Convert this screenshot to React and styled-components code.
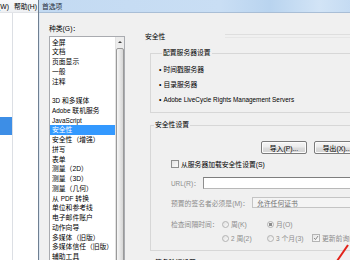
import React from 'react';
import styled, { createGlobalStyle } from 'styled-components';

const GlobalStyle = createGlobalStyle`
  html, body { margin: 0; padding: 0; background: #fff; }
  body { font-family: "Liberation Sans", "Noto Sans CJK SC", sans-serif; }
`;

const categories = [
  '全屏', '文档', '页面显示', '一般', '注释', '',
  ['3D', ' 和多媒体'], ['Adobe', ' 联机服务'], ['JavaScript', ''], '安全性',
  '安全性（增强）', '拼写', '表单', '测量（2D）', '测量（3D）', '测量（几何）',
  ['', '从 ', 'PDF', ' 转换'], '单位和参考线', '电子邮件账户', '动作向导',
  '多媒体（旧版）', '多媒体信任（旧版）', '辅助工具', '跟踪器',
];

const Screen = styled.div`
  position: relative;
  width: 350px;
  height: 260px;
  overflow: hidden;
  display: flex;
  font-size: 6.8px;
  color: #000;
  background: #fff;
`;

const Lat = styled.span`
  font-family: "Liberation Sans", sans-serif;
  font-size: 6.4px;
`;

/* background application behind the dialog */
const BackApp = styled.div`
  width: 38px;
  flex: none;
  display: flex;
  flex-direction: column;
  background: #fff;
`;

const MenuBar = styled.div`
  height: 12px;
  flex: none;
  display: flex;
  align-items: center;
  gap: 5px;
  background: linear-gradient(#f8f9fb, #eef0f3);
  border-bottom: 1px solid #e2e4e8;
  white-space: nowrap;
  margin-left: -2px;
`;

const BackBody = styled.div`
  flex: 1;
  display: flex;
`;

const BackSide = styled.div`
  width: 12px;
  border-right: 1px solid #dcdfe4;
`;

const BackSelection = styled.div`
  height: 18px;
  margin-top: 104px;
  background: #3d8ee6;
`;

/* dialog */
const Dialog = styled.div`
  flex: 1;
  display: flex;
  flex-direction: column;
  min-height: 0;
  border-left: 1px solid #6f7f92;
  box-shadow: inset 1px 0 0 #dde7f2;
  background: #f0f0f0;
`;

const TitleBar = styled.div`
  height: 12px;
  flex: none;
  display: flex;
  align-items: center;
  padding-left: 3px;
  background: linear-gradient(90deg, #c3daf2 0%, #c9def4 55%, #b9d4ef 70%, #d2e4f6 85%, #bdd6f0 100%);
  border-bottom: 1px solid #a9bed6;
  color: #1e2a38;
`;

const Client = styled.div`
  flex: 1;
  min-height: 0;
  display: flex;
  padding-left: 10px;
`;

const CategoryCol = styled.div`
  width: 76px;
  flex: none;
  display: flex;
  flex-direction: column;
  padding-top: 11px;
`;

const FieldLabel = styled.div`
  height: 10px;
  flex: none;
  line-height: 10px;
  margin-bottom: 2px;
  white-space: nowrap;
`;

const ListBox = styled.div`
  flex: 1;
  display: flex;
  border: 1px solid #a9abb0;
  background: #fff;
`;

const ListItems = styled.div`
  flex: 1;
  padding-top: 0.5px;
`;

const ListItem = styled.div`
  height: 9.75px;
  line-height: 9.75px;
  padding-left: 2px;
  white-space: nowrap;
  background: ${p => (p.$selected ? '#3399ff' : 'transparent')};
  color: ${p => (p.$selected ? '#fff' : '#000')};
`;

const ScrollBar = styled.div`
  width: 8px;
  flex: none;
  display: flex;
  flex-direction: column;
  background: #ececec;
  border-left: 1px solid #e2e2e2;
`;

const ScrollArrow = styled.div`
  height: 10px;
  flex: none;
  display: flex;
  align-items: center;
  justify-content: center;
  &::before {
    content: '';
    border-left: 2px solid transparent;
    border-right: 2px solid transparent;
    border-bottom: 2px solid #404040;
  }
`;

const ScrollThumb = styled.div`
  flex: 1;
  margin-top: 1px;
  border: 1px solid #9a9a9a;
  border-radius: 2px;
  background: linear-gradient(90deg, #f6f6f6, #e3e3e3 60%, #d6d6d6);
`;

/* right panel */
const Panel = styled.div`
  width: 224px;
  flex: none;
  margin-left: 14px;
  padding: 18px 0 0 6px;
  display: flex;
  flex-direction: column;
`;

const PanelHeading = styled.div`
  height: 10px;
  flex: none;
  display: flex;
  align-items: center;
  white-space: nowrap;
  &::after {
    content: '';
    flex: 1;
    margin-left: 60px;
    height: 2px;
    border-top: 1px solid #dedede;
    border-bottom: 1px solid #e6e6e6;
  }
`;

const GroupBox = styled.fieldset`
  margin: ${p => p.$gap || 7}px 0 0 5px;
  padding: ${p => p.$pad || '0'};
  border: 1px solid #d7d7d7;
  min-width: 0;
  flex: none;
  display: flex;
  flex-direction: column;
`;

const Legend = styled.legend`
  margin-left: 3px;
  padding: 0 1px;
  height: 10px;
  line-height: 10px;
  white-space: nowrap;
`;

const BulletRow = styled.div`
  height: 15px;
  line-height: 15px;
  white-space: nowrap;
  &::before {
    content: '•';
    margin-right: 2px;
  }
`;

const ButtonRow = styled.div`
  display: flex;
  justify-content: flex-end;
  gap: 7px;
  padding-right: 8px;
`;

const Button = styled.div`
  width: 44px;
  height: 11px;
  display: flex;
  align-items: center;
  justify-content: center;
  border: 1px solid #7b7b7b;
  border-radius: 2px;
  background: linear-gradient(#f6f6f6 0%, #ebebeb 48%, #dddddd 52%, #d3d3d3 100%);
  box-shadow: inset 0 0 0 1px #fcfcfc;
  white-space: nowrap;
`;

const CheckRow = styled.div`
  height: 10px;
  display: flex;
  align-items: center;
  gap: 2px;
  white-space: nowrap;
  color: ${p => (p.$disabled ? '#8d8d8d' : '#000')};
`;

const CheckBox = styled.div`
  width: 6px;
  height: 6px;
  flex: none;
  display: flex;
  align-items: center;
  justify-content: center;
  border: 1px solid ${p => (p.$disabled ? '#b4b4b4' : '#8e8f8f')};
  background: linear-gradient(135deg, #e4e4e4, #fbfbfb);
`;

const Row = styled.div`
  display: flex;
  align-items: center;
  margin-top: ${p => p.$top}px;
  padding-left: 20px;
  height: ${p => p.$h}px;
`;

const RowLabel = styled.div`
  width: ${p => p.$w}px;
  flex: none;
  color: #8d8d8d;
  white-space: nowrap;
`;

const TextInput = styled.div`
  flex: 1;
  height: 10px;
  margin-right: 6px;
  border: 1px solid #b8b8b8;
  border-top-color: #7e7e7e;
  border-left-color: #8e8e8e;
  background: #fff;
`;

const Select = styled.div`
  flex: 1;
  height: 9px;
  margin-right: 6px;
  padding-left: 4px;
  display: flex;
  align-items: center;
  border: 1px solid #c4c4c4;
  background: #f4f4f4;
  color: #6f6f6f;
  white-space: nowrap;
`;

const IntervalGrid = styled.div`
  display: grid;
  grid-template-columns: 51px 45px 45px 1fr;
  grid-auto-rows: 14px;
  align-items: center;
  margin-top: 9px;
  padding-left: 20px;
  color: #8d8d8d;
  white-space: nowrap;
`;

const Radio = styled.div`
  display: flex;
  align-items: center;
  gap: 2px;
  &::before {
    content: '';
    width: 5px;
    height: 5px;
    border-radius: 50%;
    border: 1px solid #b3b3b3;
    background: ${p => (p.$on
      ? 'radial-gradient(circle, #8c8c8c 0 1.5px, #f2f2f2 2px)'
      : 'linear-gradient(135deg, #e0e0e0, #fafafa)')};
  }
`;

const Annotation = styled.svg`
  position: absolute;
  left: 333px;
  top: 243px;
`;

function App() {
  return (
    <>
      <GlobalStyle />
      <Screen>
        <BackApp>
          <MenuBar>
            <span>(W)</span>
            <span>帮助(H)</span>
          </MenuBar>
          <BackBody>
            <BackSide>
              <BackSelection />
            </BackSide>
          </BackBody>
        </BackApp>

        <Dialog>
          <TitleBar>首选项</TitleBar>
          <Client>
            <CategoryCol>
              <FieldLabel>种类(G)：</FieldLabel>
              <ListBox>
                <ListItems>
                  {categories.map((c, i) => (
                    <ListItem key={i} $selected={c === '安全性'}>
                      {Array.isArray(c)
                        ? c.length === 4
                          ? <>{c[1]}<Lat>{c[2]}</Lat>{c[3]}</>
                          : <><Lat>{c[0]}</Lat>{c[1]}</>
                        : c || '\u00a0'}
                    </ListItem>
                  ))}
                </ListItems>
                <ScrollBar>
                  <ScrollArrow />
                  <ScrollThumb />
                </ScrollBar>
              </ListBox>
            </CategoryCol>

            <Panel>
              <PanelHeading>安全性</PanelHeading>

              <GroupBox $gap={7} $pad="4px 0 5px 8px">
                <Legend>配置服务器设置</Legend>
                <BulletRow>时间戳服务器</BulletRow>
                <BulletRow>目录服务器</BulletRow>
                <BulletRow><Lat>Adobe LiveCycle Rights Management Servers</Lat></BulletRow>
              </GroupBox>

              <GroupBox $gap={7} $pad="11px 0 5px 0">
                <Legend>安全性设置</Legend>
                <ButtonRow>
                  <Button>导入(P)...</Button>
                  <Button>导出(X)...</Button>
                </ButtonRow>
                <Row $top={5} $h={10}>
                  <CheckRow>
                    <CheckBox />
                    从服务器加载安全性设置(S)
                  </CheckRow>
                </Row>
                <Row $top={8} $h={12}>
                  <RowLabel $w={32}><Lat>URL</Lat>(R)：</RowLabel>
                  <TextInput />
                </Row>
                <Row $top={8} $h={11}>
                  <RowLabel $w={81}>预置的签名者必须是(M)：</RowLabel>
                  <Select>允许任何证书</Select>
                </Row>
                <IntervalGrid>
                  <span>检查间隔时间：</span>
                  <Radio>周(K)</Radio>
                  <Radio $on>月(O)</Radio>
                  <span />
                  <span />
                  <Radio><Lat>2</Lat> 周(2)</Radio>
                  <Radio><Lat>3</Lat> 个月(3)</Radio>
                  <CheckRow $disabled>
                    <CheckBox $disabled>
                      <svg width="6" height="6" viewBox="0 0 6 6">
                        <path d="M1 3 L2.5 4.6 L5 1" fill="none" stroke="#8a8a8a" strokeWidth="1" />
                      </svg>
                    </CheckBox>
                    更新前询问(A)
                  </CheckRow>
                </IntervalGrid>
              </GroupBox>

              <GroupBox $pad="4px 0 10px 0">
                <Legend>签名验证设置</Legend>
              </GroupBox>
            </Panel>
          </Client>
        </Dialog>

        <Annotation width="18" height="18" viewBox="0 0 18 18">
          <path d="M15 2 L4 18" stroke="#e2231a" strokeWidth="2" fill="none" />
        </Annotation>
      </Screen>
    </>
  );
}

export default App;
